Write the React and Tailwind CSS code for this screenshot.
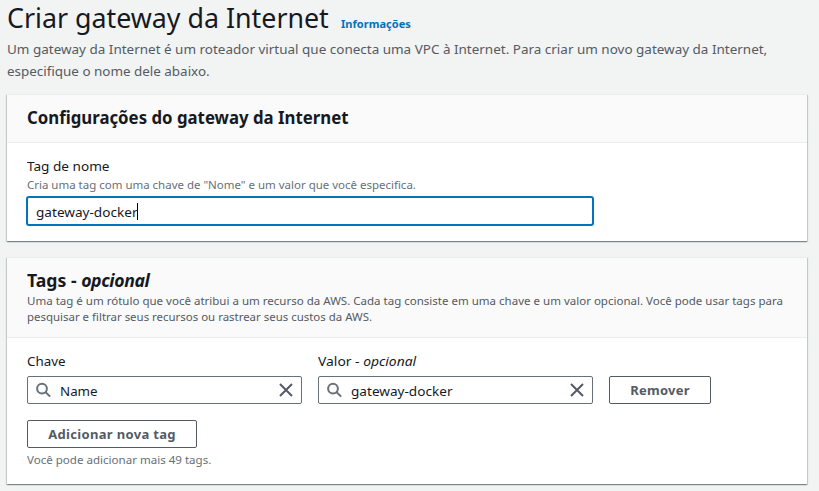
import React from "react";

function Line({ className = "", children }) {
  return <div className={"w-max origin-left whitespace-nowrap " + className}>{children}</div>;
}

function SearchIcon() {
  return (
    <svg className="block size-4 shrink-0" viewBox="0 0 16 16" fill="none" stroke="#687078" strokeWidth="2">
      <circle cx="6" cy="6.6" r="4.9" />
      <path d="M9.6 10.2 14.2 14.6" />
    </svg>
  );
}

function CloseIcon() {
  return (
    <svg className="block size-4 shrink-0" viewBox="0 0 16 16" fill="none" stroke="#545b64" strokeWidth="2">
      <path d="M2 2l12 12M14 2 2 14" />
    </svg>
  );
}

function SearchField({ label, labelClass, value, valueClass }) {
  return (
    <div className="w-[275px]">
      <Line className={"h-[25px] text-[13px] leading-[20px] " + labelClass}>{label}</Line>
      <div className="flex h-[28px] items-center rounded-[2px] border border-[#687078] bg-white pl-[8px] pr-[7px]">
        <SearchIcon />
        <div className="ml-[8px] grow pt-[2px]">
          <Line className={"text-[13px] leading-[20px] " + valueClass}>{value}</Line>
        </div>
        <CloseIcon />
      </div>
    </div>
  );
}

function Card({ className, children }) {
  return (
    <section
      className={
        "w-[800px] border-t border-[#eaeded] bg-white shadow-[0_1px_1px_0_rgba(0,28,36,0.3),1px_1px_1px_0_rgba(0,28,36,0.15),-1px_1px_1px_0_rgba(0,28,36,0.15)] " +
        className
      }
    >
      {children}
    </section>
  );
}

const button =
  "flex h-[28px] items-center justify-center rounded-[2px] border border-[#545b64] bg-white text-[13px] font-bold leading-[20px] text-[#545b64] whitespace-nowrap ";

export default function App() {
  return (
    <main className="h-[491px] w-[819px] overflow-hidden bg-[#f2f3f3] pl-[7px] font-['Noto_Sans',sans-serif] text-[#16191f]">
      <header className="h-[94px]">
        <div className="flex h-[38px] items-start">
          <h1 className="w-[334px] text-[28px] leading-[34px]">
            <Line className="scale-x-[0.957]">Criar gateway da Internet</Line>
          </h1>
          <a className="pt-[14px] text-[11px] font-bold leading-[20px] tracking-[0.04px] text-[#0073bb]">Informações</a>
        </div>
        <div className="text-[13px] leading-[22px] text-[#545b64]">
          <Line className="scale-x-[1.036]">Um gateway da Internet é um roteador virtual que conecta uma VPC à Internet. Para criar um novo gateway da Internet,</Line>
          <Line className="scale-x-[1.032]">especifique o nome dele abaixo.</Line>
        </div>
      </header>

      <Card className="h-[147px]">
        <div className="h-[48px] border-b border-[#eaeded] bg-[#fafafa] pl-[20px] pt-[11px]">
          <h2 className="text-[18px] font-bold leading-[22px]">
            <Line className="scale-x-[0.933]">Configurações do gateway da Internet</Line>
          </h2>
        </div>
        <div className="pl-[20px] pt-[13px]">
          <Line className="scale-x-[1.045] text-[13px] leading-[20px]">Tag de nome</Line>
          <Line className="scale-x-[1.043] pt-[1px] text-[11px] leading-[16px] text-[#687078]">
            Cria uma tag com uma chave de "Nome" e um valor que você especifica.
          </Line>
          <div className="-ml-px mt-[3px] flex h-[30px] w-[568px] items-center rounded-[3px] border-2 border-[#0073bb] bg-white pl-[8px]">
            <div className="w-[101px] pt-[1px]">
              <Line className="scale-x-[1.045] text-[13px] leading-[20px]">gateway-docker</Line>
            </div>
            <span className="h-[17px] w-px bg-black" />
          </div>
        </div>
      </Card>

      <Card className="mt-[16px] h-[227px]">
        <div className="h-[80px] border-b border-[#eaeded] bg-[#fafafa] pl-[20px] pt-[11px]">
          <h2 className="text-[18px] font-bold leading-[22px]">
            <Line className="scale-x-[0.98]">Tags - <i className="tracking-[-0.4px]">opcional</i></Line>
          </h2>
          <div className="pt-[2px] text-[11px] leading-[16px] text-[#545b64]">
            <Line className="scale-x-[1.047]">Uma tag é um rótulo que você atribui a um recurso da AWS. Cada tag consiste em uma chave e um valor opcional. Você pode usar tags para</Line>
            <Line className="scale-x-[1.04]">pesquisar e filtrar seus recursos ou rastrear seus custos da AWS.</Line>
          </div>
        </div>
        <div className="pl-[20px] pt-[13px]">
          <div className="flex items-end gap-[16px]">
            <SearchField label="Chave" labelClass="scale-x-[1.03]" value="Name" valueClass="scale-x-[1.025]" />
            <SearchField
              label={<>Valor - <i>opcional</i></>}
              labelClass="scale-x-[1.066]"
              value="gateway-docker"
              valueClass="scale-x-[1.045]"
            />
            <button className={button + "w-[102px] tracking-[0.25px]"}>Remover</button>
          </div>
          <button className={button + "mt-[16px] w-[170px] tracking-[0.33px]"}>Adicionar nova tag</button>
          <Line className="mt-[4px] scale-x-[1.05] text-[11px] leading-[16px] text-[#687078]">Você pode adicionar mais 49 tags.</Line>
        </div>
      </Card>
    </main>
  );
}
